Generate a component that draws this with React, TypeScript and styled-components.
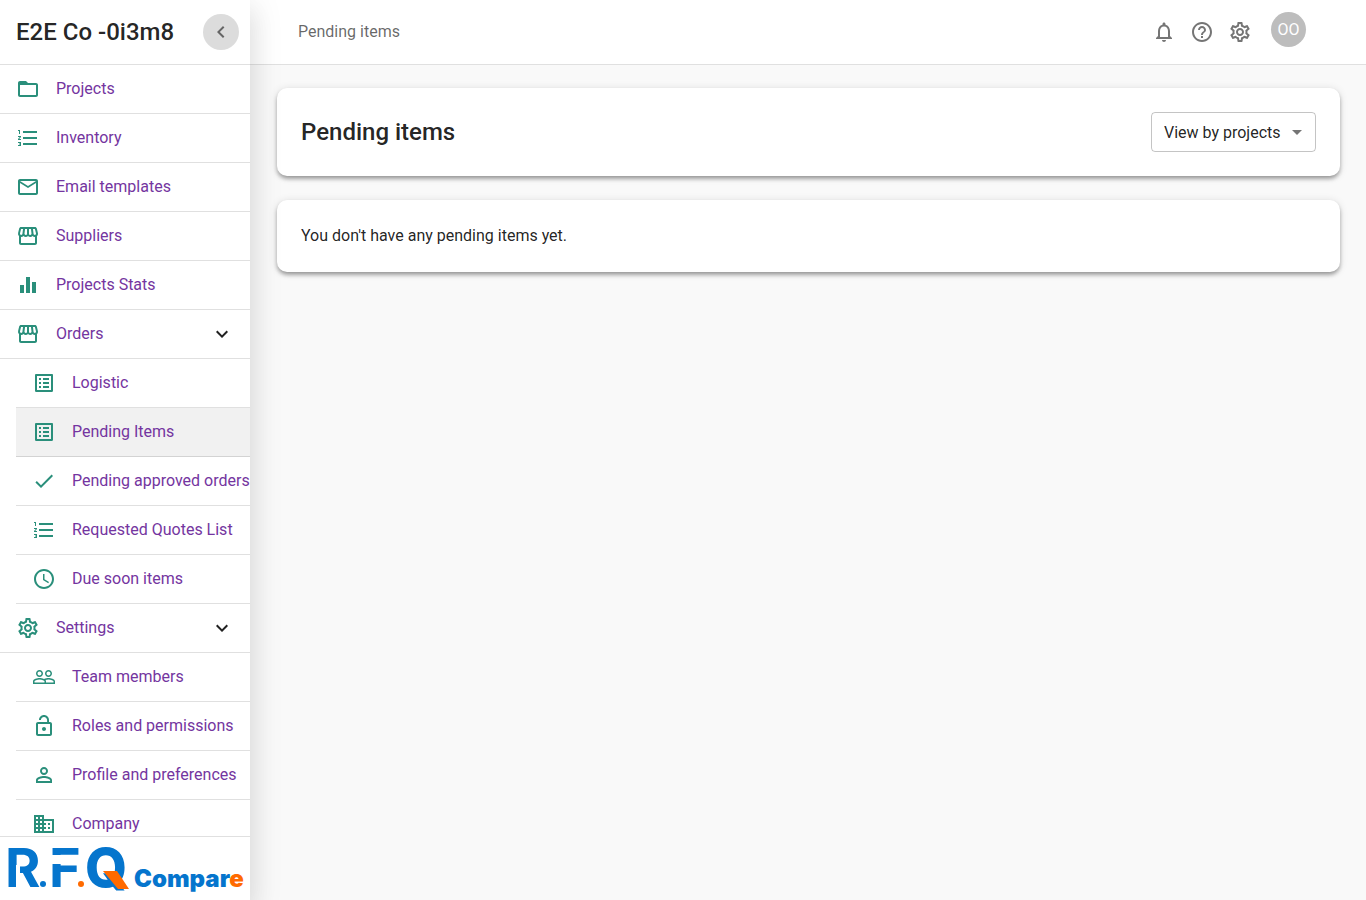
import React from "react";
import styled, { createGlobalStyle } from "styled-components";
import type { IconType } from "react-icons";
import {
  MdArrowDropDown,
  MdAccessTime,
  MdCheck,
  MdChevronLeft,
  MdEqualizer,
  MdExpandMore,
  MdFolderOpen,
  MdFormatListNumbered,
  MdHelpOutline,
  MdLockOpen,
  MdMailOutline,
  MdNotificationsNone,
  MdOutlineBusiness,
  MdOutlineListAlt,
  MdOutlineSettings,
  MdOutlineStorefront,
  MdPeopleOutline,
  MdPersonOutline,
} from "react-icons/md";

const GlobalStyle = createGlobalStyle`
  *, *::before, *::after { box-sizing: border-box; }
  body {
    margin: 0;
    background: #f9f9f9;
    color: rgba(0, 0, 0, 0.87);
    font-family: Roboto, "Liberation Sans", sans-serif;
    font-size: 16px;
    line-height: 24px;
  }
`;

const Layout = styled.div`
  display: grid;
  grid-template-columns: 250px minmax(0, 1fr);
  min-height: 100vh;
`;

const Sidebar = styled.aside`
  position: sticky;
  top: 0;
  z-index: 2;
  display: flex;
  flex-direction: column;
  height: 100vh;
  background: #fff;
  box-shadow:
    0 16px 24px 2px rgba(0, 0, 0, 0.07),
    0 6px 30px 5px rgba(0, 0, 0, 0.08);
`;

const SidebarHeader = styled.div`
  display: flex;
  flex: none;
  align-items: center;
  justify-content: space-between;
  height: 65px;
  padding: 0 11px 0 16px;
  border-bottom: 1px solid rgba(0, 0, 0, 0.12);
`;

const CompanyName = styled.span`
  font-size: 24px;
  font-weight: 500;
  line-height: 32px;
`;

const CollapseButton = styled.button`
  display: grid;
  place-items: center;
  width: 36px;
  height: 36px;
  padding: 0;
  border: 0;
  border-radius: 50%;
  background: #dcdcdc;
  color: rgba(0, 0, 0, 0.54);
  font-size: 24px;
  cursor: pointer;
`;

const Nav = styled.nav`
  flex: 1;
  min-height: 0;
  overflow-x: hidden;
  overflow-y: auto;
  scrollbar-width: none;
`;

const NavList = styled.ul<{ $nested?: boolean }>`
  margin: 0;
  padding: 0 0 0 ${(p) => (p.$nested ? 16 : 0)}px;
  list-style: none;
`;

const NavLink = styled.a<{ $active?: boolean }>`
  display: flex;
  align-items: center;
  height: 49px;
  padding: 0 16px;
  border-bottom: 1px solid rgba(0, 0, 0, 0.12);
  background: ${(p) => (p.$active ? "#f1f1f1" : "transparent")};
  color: #7435a0;
  text-decoration: none;
  white-space: nowrap;
`;

const NavIcon = styled.span`
  display: flex;
  flex: none;
  width: 40px;
  color: #2a8f7b;
  font-size: 24px;
`;

const NavLabel = styled.span`
  flex: 1;
`;

const ExpandIcon = styled(MdExpandMore)`
  color: rgba(0, 0, 0, 0.87);
  font-size: 24px;
`;

const SidebarFooter = styled.div`
  flex: none;
  height: 64px;
  border-top: 1px solid rgba(0, 0, 0, 0.12);
`;

const LogoDrawing = styled.svg`
  display: block;
  overflow: visible;
  font-family: Inter, sans-serif;
`;

const Page = styled.div`
  display: flex;
  flex-direction: column;
`;

const TopBar = styled.header`
  display: flex;
  align-items: center;
  justify-content: space-between;
  height: 65px;
  padding: 0 60px 0 48px;
  border-bottom: 1px solid rgba(0, 0, 0, 0.12);
  background: #fff;
`;

const Breadcrumb = styled.span`
  color: rgba(0, 0, 0, 0.6);
`;

const Actions = styled.div`
  display: flex;
  align-items: center;
  gap: 14px;
`;

const IconButton = styled.button`
  display: flex;
  padding: 0;
  border: 0;
  background: none;
  color: rgba(0, 0, 0, 0.54);
  font-size: 24px;
  cursor: pointer;
`;

const Avatar = styled.button`
  width: 35px;
  height: 35px;
  margin: 0 0 5px 5px;
  padding: 0;
  border: 0;
  border-radius: 50%;
  background: #bdbdbd;
  color: #fff;
  font: inherit;
  cursor: pointer;
`;

const Content = styled.main`
  display: flex;
  flex-direction: column;
  gap: 24px;
  padding: 23px 26px 24px 27px;
`;

const Card = styled.section`
  display: flex;
  align-items: center;
  justify-content: space-between;
  padding: 24px;
  border-radius: 10px;
  background: #fff;
  box-shadow:
    0 3px 4px -1px rgba(0, 0, 0, 0.26),
    0 3px 4px 0 rgba(0, 0, 0, 0.14),
    0 1px 8px 0 rgba(0, 0, 0, 0.12);
`;

const Title = styled.h1`
  margin: 0;
  font-size: 24px;
  font-weight: 500;
  line-height: 32px;
`;

const Message = styled.p`
  margin: 0;
`;

const SelectField = styled.div`
  position: relative;
`;

const Select = styled.select`
  width: 165px;
  height: 40px;
  padding: 1px 32px 0 12px;
  border: 1px solid rgba(0, 0, 0, 0.23);
  border-radius: 4px;
  appearance: none;
  background: transparent;
  color: inherit;
  font: inherit;
`;

const SelectArrow = styled(MdArrowDropDown)`
  position: absolute;
  top: 8px;
  right: 7px;
  color: rgba(0, 0, 0, 0.54);
  font-size: 24px;
  pointer-events: none;
`;

interface NavEntry {
  label: string;
  icon: IconType;
  active?: boolean;
  children?: NavEntry[];
}

const entries: NavEntry[] = [
  { label: "Projects", icon: MdFolderOpen },
  { label: "Inventory", icon: MdFormatListNumbered },
  { label: "Email templates", icon: MdMailOutline },
  { label: "Suppliers", icon: MdOutlineStorefront },
  { label: "Projects Stats", icon: MdEqualizer },
  {
    label: "Orders",
    icon: MdOutlineStorefront,
    children: [
      { label: "Logistic", icon: MdOutlineListAlt },
      { label: "Pending Items", icon: MdOutlineListAlt, active: true },
      { label: "Pending approved orders", icon: MdCheck },
      { label: "Requested Quotes List", icon: MdFormatListNumbered },
      { label: "Due soon items", icon: MdAccessTime },
    ],
  },
  {
    label: "Settings",
    icon: MdOutlineSettings,
    children: [
      { label: "Team members", icon: MdPeopleOutline },
      { label: "Roles and permissions", icon: MdLockOpen },
      { label: "Profile and preferences", icon: MdPersonOutline },
      { label: "Company", icon: MdOutlineBusiness },
    ],
  },
];

function NavItems({ items, nested }: { items: NavEntry[]; nested?: boolean }) {
  return (
    <NavList $nested={nested}>
      {items.map(({ label, icon: Icon, active, children }) => (
        <li key={label}>
          <NavLink href="#" $active={active} aria-current={active ? "page" : undefined}>
            <NavIcon>
              <Icon />
            </NavIcon>
            <NavLabel>{label}</NavLabel>
            {children && <ExpandIcon />}
          </NavLink>
          {children && <NavItems items={children} nested />}
        </li>
      ))}
    </NavList>
  );
}

function Logo() {
  return (
    <LogoDrawing width="250" height="63" viewBox="0 0 250 63" role="img" aria-label="R.F.Q Compare">
      <g fill="#0575cd" fontSize="54" fontWeight="700">
        <text x="5" y="50">R</text>
        <text x="49" y="50">F</text>
        <text x="85" y="50" fontWeight="800">Q</text>
      </g>
      {/* stencil cuts in the R and the F */}
      <path d="M16 28h4v24h-4zM50 18h30v9H50z" fill="#fff" />
      <circle cx="43" cy="47" r="3" fill="#0575cd" />
      <circle cx="81" cy="47" r="3" fill="#ff6a00" />
      <path d="M103 34h14l12 18h-11z" fill="#ff6a00" />
      <text x="134" y="50" fontSize="24" fontWeight="900" fill="#0575cd">
        Compar<tspan fill="#ff6a00">e</tspan>
      </text>
    </LogoDrawing>
  );
}

export default function App() {
  return (
    <>
      <GlobalStyle />
      <Layout>
        <Sidebar>
          <SidebarHeader>
            <CompanyName>E2E Co -0i3m8</CompanyName>
            <CollapseButton type="button" aria-label="Collapse menu">
              <MdChevronLeft />
            </CollapseButton>
          </SidebarHeader>
          <Nav aria-label="Main">
            <NavItems items={entries} />
          </Nav>
          <SidebarFooter>
            <Logo />
          </SidebarFooter>
        </Sidebar>
        <Page>
          <TopBar>
            <Breadcrumb>Pending items</Breadcrumb>
            <Actions>
              <IconButton type="button" aria-label="Notifications">
                <MdNotificationsNone />
              </IconButton>
              <IconButton type="button" aria-label="Help">
                <MdHelpOutline />
              </IconButton>
              <IconButton type="button" aria-label="Settings">
                <MdOutlineSettings />
              </IconButton>
              <Avatar type="button">OO</Avatar>
            </Actions>
          </TopBar>
          <Content>
            <Card>
              <Title>Pending items</Title>
              <SelectField>
                <Select aria-label="View" defaultValue="projects">
                  <option value="projects">View by projects</option>
                  <option value="items">View by items</option>
                </Select>
                <SelectArrow />
              </SelectField>
            </Card>
            <Card>
              <Message>You don't have any pending items yet.</Message>
            </Card>
          </Content>
        </Page>
      </Layout>
    </>
  );
}
